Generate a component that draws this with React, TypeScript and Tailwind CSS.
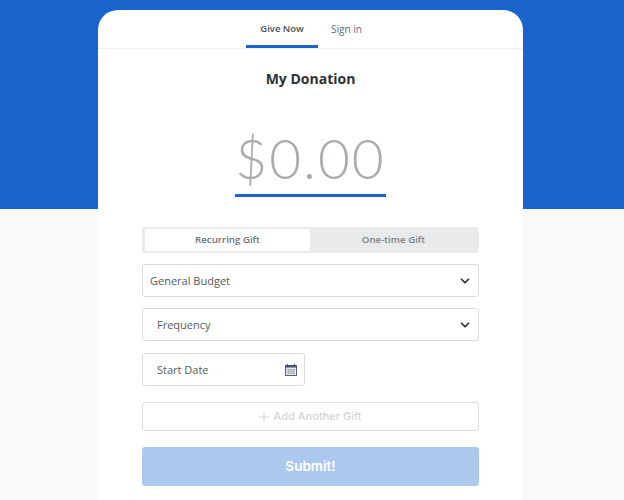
import { ChevronDown, Plus } from 'lucide-react';

function SelectBox({ label, indent }: { label: string; indent: string }) {
  return (
    <div className={`flex h-[33px] items-center justify-between rounded-[3px] border border-[#dcdcdc] bg-white pr-[6px] ${indent}`}>
      <span className="mt-[2px] text-[11px] text-[#55595c]">{label}</span>
      <ChevronDown className="h-[14px] w-[14px] text-[#2b2f33]" strokeWidth={3} />
    </div>
  );
}

function CalendarIcon() {
  return (
    <svg width="12" height="12" viewBox="0 0 12 12" className="block">
      <rect x="0.5" y="1.5" width="11" height="10" fill="#e4e7ee" stroke="#5d5d7c" />
      <rect x="0.5" y="1.5" width="11" height="2" fill="#4a4d66" />
      <rect x="2" y="0" width="1" height="2" fill="#4a4d66" />
      <rect x="9" y="0" width="1" height="2" fill="#4a4d66" />
      <path d="M2 5.5h8M2 7.5h8M2 9.5h8M3.5 5v5M6 5v5M8.5 5v5" stroke="#a3a8b8" strokeWidth="0.8" />
    </svg>
  );
}

export default function App() {
  return (
    <div className="h-[500px] overflow-hidden bg-[linear-gradient(#1a63cc_209px,#f9f9f9_209px)] pt-[10px] font-['Open_Sans',sans-serif]">
      <div className="ml-[98px] h-[490px] w-[425px] rounded-t-[20px] bg-white">
        {/* Tabs */}
        <div className="flex h-[39px] justify-center border-b border-[#eeeff1]">
          <div className="flex h-[38px] w-[72px] items-center justify-center border-b-[3px] border-[#1a63cc] pt-[3px] text-[9.5px] font-semibold text-[#4a4f55]">
            Give Now
          </div>
          <div className="flex h-[38px] items-center px-[13px] pt-[1px] text-[10px] text-[#5f6b76]">
            Sign in
          </div>
        </div>

        <h2 className="mt-[19px] text-center text-[14px] leading-[22px] font-bold text-[#2d3135]">My Donation</h2>

        {/* Amount */}
        <div className="mx-auto mt-[26px] flex h-[81px] w-[151px] items-center justify-center border-b-[3px] border-[#1a63cc] pt-[7px] font-['Lato',sans-serif] text-[55px] leading-none font-light tracking-[2px] text-[#a9acaf]">
          $0.00
        </div>

        <div className="mx-[44px] mt-[30px] flex flex-col">
          {/* Gift type */}
          <div className="flex h-[26px] rounded-[3px] bg-[#e9eaec] py-[2px] pl-[3px] pr-[2px]">
            <div className="flex w-[165px] items-center justify-center rounded-[2px] bg-white text-[9.7px] font-semibold text-[#6b7075]">
              Recurring Gift
            </div>
            <div className="flex flex-1 items-center justify-center text-[9.7px] font-semibold text-[#7d8185]">
              One-time Gift
            </div>
          </div>

          <div className="mt-[11px]">
            <SelectBox label="General Budget" indent="pl-[7px]" />
          </div>
          <div className="mt-[11px]">
            <SelectBox label="Frequency" indent="pl-[14px]" />
          </div>

          {/* Start date */}
          <div className="mt-[12px] flex h-[33px] w-[163px] items-center justify-between rounded-[3px] border border-[#dcdcdc] bg-white pl-[14px] pr-[7px]">
            <span className="mt-[2px] text-[11px] text-[#55595c]">Start Date</span>
            <CalendarIcon />
          </div>

          <div className="mt-[16px] flex h-[29px] items-center justify-center gap-[3px] rounded-[3px] border border-[#dcdcdc] bg-white pr-[3px] font-['Inter',sans-serif] text-[11px] font-medium text-[#d3d4d6]">
            <Plus className="h-[14px] w-[14px]" strokeWidth={2} />
            Add Another Gift
          </div>

          <div className="mt-[16px] flex h-[39px] items-center justify-center rounded-[3px] bg-[#adc8ee] font-['Inter',sans-serif] text-[13.5px] font-semibold text-white">
            Submit!
          </div>
        </div>
      </div>
    </div>
  );
}
